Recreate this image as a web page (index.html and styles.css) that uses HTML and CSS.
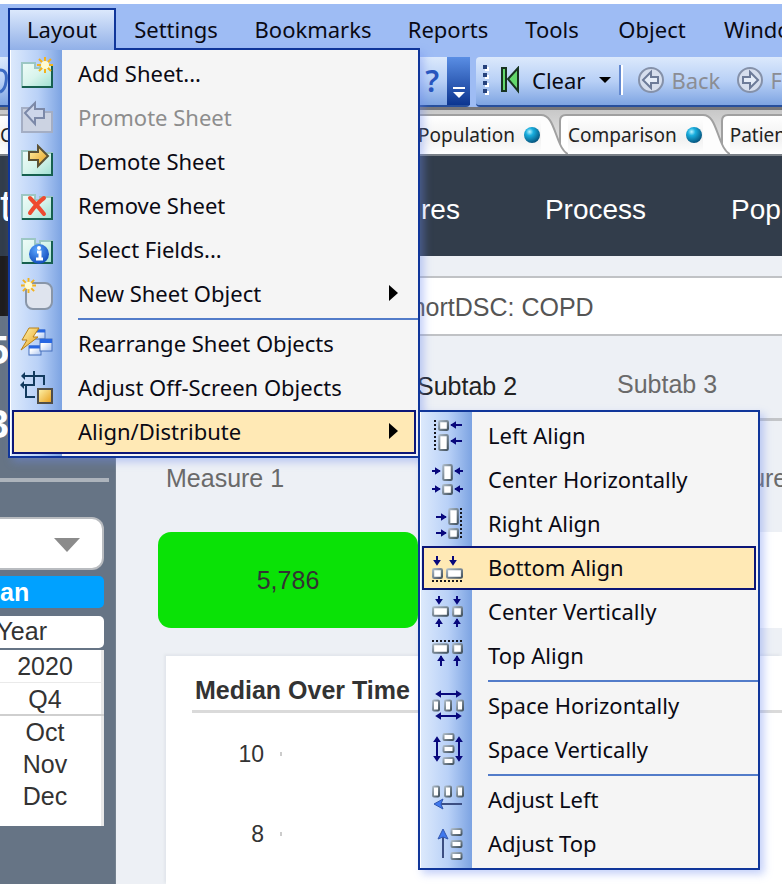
FILE: index.html
```html
<!DOCTYPE html>
<html lang="en">
<head>
<meta charset="utf-8">
<title>Dashboard</title>
<link rel="stylesheet" href="styles.css">
</head>
<body>
<svg class="defs" width="0" height="0" aria-hidden="true">
  <defs>
    <linearGradient id="sheet" x1="0" y1="0" x2="1" y2="1"><stop offset="0" stop-color="#effcf8"/><stop offset=".5" stop-color="#d8f4ec"/><stop offset="1" stop-color="#9fe0d2"/></linearGradient>
    <linearGradient id="gold" x1="0" y1="0" x2="1" y2="1"><stop offset="0" stop-color="#fff6b0"/><stop offset="1" stop-color="#e79c18"/></linearGradient>
    <linearGradient id="steel" x1="0" y1="0" x2="1" y2="1"><stop offset="0" stop-color="#a9b7c4"/><stop offset="1" stop-color="#44535f"/></linearGradient>
    <linearGradient id="win" x1="0" y1="0" x2="1" y2="1"><stop offset="0.3" stop-color="#fff"/><stop offset="1" stop-color="#a9c3f0"/></linearGradient>
    <radialGradient id="ball" cx=".35" cy=".3" r=".8"><stop offset="0" stop-color="#b8f2ff"/><stop offset=".3" stop-color="#19aede"/><stop offset="1" stop-color="#02466f"/></radialGradient>
    <radialGradient id="info" cx=".4" cy=".3" r=".8"><stop offset="0" stop-color="#5aa6ff"/><stop offset="1" stop-color="#0a42b4"/></radialGradient>
    <symbol id="box" viewBox="0 0 10 10"><rect x="1" y="1" width="8" height="8" rx="1" fill="#fff" stroke="url(#steel)" stroke-width="2"/></symbol>
    <symbol id="wide" viewBox="0 0 16 10"><rect x="1" y="1" width="14" height="8" rx="1" fill="#fff" stroke="url(#steel)" stroke-width="2"/></symbol>
    <symbol id="tall" viewBox="0 0 10 16"><rect x="1" y="1" width="8" height="14" rx="1" fill="#fff" stroke="url(#steel)" stroke-width="2"/></symbol>
    <symbol id="slim" viewBox="0 0 8 12"><rect x="1" y="1" width="6" height="10" rx="1" fill="#fff" stroke="url(#steel)" stroke-width="2"/></symbol>
    <symbol id="flat" viewBox="0 0 12 8"><rect x="1" y="1" width="10" height="6" rx="1" fill="#fff" stroke="url(#steel)" stroke-width="2"/></symbol>
    <symbol id="folder" viewBox="0 0 34 34"><path d="M2 7h13v5h5v-3h12v22H2z" fill="url(#sheet)" stroke="#9cc7c4" stroke-width="2"/><path d="M2 31h30V9" fill="none" stroke="#17604f" stroke-width="2"/></symbol>
    <symbol id="spark" viewBox="0 0 16 16"><path d="M8 0v16M0 8h16M2 2l12 12M14 2L2 14" stroke="#f3b21c" stroke-width="2"/><circle cx="8" cy="8" r="4" fill="#fffbd0"/></symbol>
    <symbol id="tabedge" viewBox="0 0 27 40"><path d="M0 1C8 1 11 9 15 20S22 39 27 39V40H0z" fill="#fdfdfd"/><path d="M19 31V7Q19 1 25 1H27V40H24z" fill="#fff"/><path d="M0 1C8 1 11 9 15 20S22 38 27 40M19 30V7Q19 1 25 1H27" fill="none" stroke="#a0a0a0" stroke-width="2"/></symbol>
  </defs>
</svg>

<header class="chrome">
  <nav class="menubar" aria-label="Application">
    <div class="menu-root">
      <button class="bar-item open" type="button">Layout</button>
      <div class="menu" role="menu">
        <button class="item" role="menuitem"><svg class="icon" viewBox="0 0 34 34"><use href="#folder" width="34" height="34"/><use href="#spark" x="17" y="1" width="16" height="16"/></svg>Add Sheet...</button>
        <button class="item" role="menuitem" disabled><svg class="icon" viewBox="0 0 34 34"><path d="M2 8h13v4h17v20H2z" fill="#ccd3e2" stroke="#a4aec4" stroke-width="2"/><path d="M5 13L15 3v6h9v9h-9v6z" fill="#cdd6ea" stroke="#7c89a8" stroke-width="2"/></svg>Promote Sheet</button>
        <button class="item" role="menuitem"><svg class="icon" viewBox="0 0 34 34"><use href="#folder" width="34" height="34"/><path d="M9 8h9V2l10 10-10 10v-6H9z" fill="url(#gold)" stroke="#5c5235" stroke-width="2"/></svg>Demote Sheet</button>
        <button class="item" role="menuitem"><svg class="icon" viewBox="0 0 34 34"><use href="#folder" width="34" height="34"/><path d="M10 10Q17 17 24 26M24 10Q17 15 10 25" fill="none" stroke="#ee4a30" stroke-width="4" stroke-linecap="round"/></svg>Remove Sheet</button>
        <button class="item" role="menuitem"><svg class="icon" viewBox="0 0 34 34"><use href="#folder" width="34" height="34"/><circle cx="19" cy="22" r="10" fill="url(#info)"/><path d="M17 20h3v7M16 27h7" fill="none" stroke="#fff" stroke-width="3"/><circle cx="19" cy="16" r="2" fill="#fff"/></svg>Select Fields...</button>
        <button class="item more" role="menuitem"><svg class="icon" viewBox="0 0 34 34"><rect x="6" y="7" width="26" height="26" rx="7" fill="#dfe4ee" stroke="#8996a8" stroke-width="2"/><use href="#spark" x="1" y="2" width="15" height="15"/></svg>New Sheet Object<svg class="arrow" viewBox="0 0 9 16"><path d="M0 0l9 8-9 8z"/></svg></button>
        <hr>
        <button class="item" role="menuitem"><svg class="icon" viewBox="0 0 34 34"><g stroke="#4770bd"><rect x="12" y="4" width="13" height="9" fill="url(#win)"/><path d="M12 5h13" stroke="#2867e2" stroke-width="3"/><rect x="9" y="20" width="12" height="9" fill="url(#win)"/><path d="M9 21h12" stroke="#2867e2" stroke-width="3"/><rect x="20" y="13" width="12" height="12" fill="url(#win)"/><path d="M20 15h12" stroke="#2867e2" stroke-width="4"/></g><path d="M9 2h10l-6 9h5L1 24l6-10H2z" fill="url(#gold)" stroke="#b88018"/></svg>Rearrange Sheet Objects</button>
        <button class="item" role="menuitem"><svg class="icon" viewBox="0 0 34 34"><path d="M3 6h21v9M3 15h11M6 15v12h9M14 1v15" fill="none" stroke="#123a5e" stroke-width="2"/><path d="M1 6l4-4v8zM0 15l4-4v8z" fill="#123a5e"/><rect x="18" y="19" width="14" height="14" fill="url(#gold)" stroke="#4f4d48" stroke-width="2"/></svg>Adjust Off-Screen Objects</button>
        <div class="sub-root">
          <button class="item more active" role="menuitem"><span class="icon"></span>Align/Distribute<svg class="arrow" viewBox="0 0 9 16"><path d="M0 0l9 8-9 8z"/></svg></button>
          <div class="menu submenu" role="menu">
            <button class="item" role="menuitem"><svg class="icon" viewBox="0 0 34 34"><path class="dots" d="M5 2v30"/><use href="#box" x="8" y="2" width="11" height="11"/><use href="#tall" x="8" y="16" width="11" height="17"/><path class="ar" d="M21 7h11M25 5v4l-3-2zM21 23h11M25 21v4l-3-2z"/></svg>Left Align</button>
            <button class="item" role="menuitem"><svg class="icon" viewBox="0 0 34 34"><use href="#tall" x="12" y="2" width="11" height="17"/><use href="#box" x="12" y="22" width="11" height="11"/><path class="ar" d="M2 9h8M6 7v4l3-2zM25 9h8M29 7v4l-3-2zM2 27h8M6 25v4l3-2zM25 27h8M29 25v4l-3-2z"/></svg>Center Horizontally</button>
            <button class="item" role="menuitem"><svg class="icon" viewBox="0 0 34 34"><path class="dots" d="M31 2v30"/><use href="#tall" x="18" y="2" width="11" height="17"/><use href="#box" x="18" y="22" width="11" height="11"/><path class="ar" d="M6 11h10M12 9v4l3-2zM6 27h10M12 25v4l3-2z"/></svg>Right Align</button>
            <button class="item active" role="menuitem"><svg class="icon" viewBox="0 0 34 34"><path class="dots" d="M2 31h32"/><use href="#box" x="2" y="18" width="11" height="11"/><use href="#wide" x="16" y="18" width="17" height="11"/><path class="ar" d="M7 6v9M5 11h4l-2 3zM23 6v9M21 11h4l-2 3z"/></svg>Bottom Align</button>
            <button class="item" role="menuitem"><svg class="icon" viewBox="0 0 34 34"><use href="#wide" x="2" y="12" width="17" height="11"/><use href="#box" x="22" y="12" width="11" height="11"/><path class="ar" d="M9 2v8M7 6h4l-2 3zM27 2v8M25 6h4l-2 3zM9 25v8M7 29h4l-2-3zM27 25v8M25 29h4l-2-3z"/></svg>Center Vertically</button>
            <button class="item" role="menuitem"><svg class="icon" viewBox="0 0 34 34"><path class="dots" d="M2 3h32"/><use href="#wide" x="2" y="5" width="17" height="11"/><use href="#box" x="22" y="5" width="11" height="11"/><path class="ar" d="M11 18v10M9 22h4l-2-3zM27 18v10M25 22h4l-2-3z"/></svg>Top Align</button>
            <hr>
            <button class="item" role="menuitem"><svg class="icon" viewBox="0 0 34 34"><use href="#slim" x="2" y="11" width="8" height="13"/><use href="#slim" x="14" y="11" width="8" height="13"/><use href="#slim" x="26" y="11" width="8" height="13"/><path class="ar" d="M7 6h22M10 4v4l-3-2zM27 4v4l3-2zM7 28h22M10 26v4l-3-2zM27 26v4l3-2z"/></svg>Space Horizontally</button>
            <button class="item" role="menuitem"><svg class="icon" viewBox="0 0 34 34"><use href="#flat" x="12" y="1" width="13" height="8"/><use href="#flat" x="12" y="13" width="13" height="8"/><use href="#flat" x="12" y="25" width="13" height="8"/><path class="ar" d="M7 6v22M5 9h4l-2-3zM5 25h4l-2 3zM29 6v22M27 9h4l-2-3zM27 25h4l-2 3z"/></svg>Space Vertically</button>
            <hr>
            <button class="item" role="menuitem"><svg class="icon" viewBox="0 0 34 34"><use href="#slim" x="2" y="3" width="8" height="13"/><use href="#slim" x="14" y="3" width="8" height="13"/><use href="#slim" x="26" y="3" width="8" height="13"/><path d="M8 22h24" stroke="#3c4e82" stroke-width="2"/><path d="M4 22l9-5-2 5 2 5z" fill="#3f78ee" stroke="#3156ae"/></svg>Adjust Left</button>
            <button class="item" role="menuitem"><svg class="icon" viewBox="0 0 34 34"><use href="#flat" x="20" y="2" width="13" height="8"/><use href="#flat" x="20" y="14" width="13" height="8"/><use href="#flat" x="20" y="26" width="13" height="8"/><path d="M13 8v24" stroke="#3c4e82" stroke-width="2"/><path d="M13 3l-5 10 5-2 5 2z" fill="#3f78ee" stroke="#3156ae"/></svg>Adjust Top</button>
          </div>
        </div>
      </div>
    </div>
    <button class="bar-item" type="button">Settings</button>
    <button class="bar-item" type="button">Bookmarks</button>
    <button class="bar-item" type="button">Reports</button>
    <button class="bar-item" type="button">Tools</button>
    <button class="bar-item" type="button">Object</button>
    <button class="bar-item last" type="button">Window</button>
  </nav>

  <div class="toolbars">
    <div class="toolbar first">
      <svg class="undo" viewBox="0 0 10 30"><path d="M0 4Q8 4 6 16Q5 24 0 26" fill="none" stroke="#3d6cc4" stroke-width="3"/></svg>
      <button class="help" type="button">?</button>
      <button class="overflow" type="button" aria-label="More buttons"><svg viewBox="0 0 14 12"><path d="M1 1h12" stroke="#fff" stroke-width="2"/><path d="M1 5h12l-6 6z" fill="#fff"/></svg></button>
    </div>
    <div class="toolbar second">
      <svg class="grip" viewBox="0 0 8 32"><path d="M5 3v28" stroke="#fff" stroke-width="4" stroke-dasharray="4 4"/><path d="M3 1v28" stroke="#26427c" stroke-width="4" stroke-dasharray="4 4"/></svg>
      <button class="tool clear" type="button"><svg class="glyph-clear" viewBox="0 0 22 28"><path d="M2 2h4v23H2zM18 2v23L8 13z" fill="#63d86c" stroke="#183420" stroke-width="2"/></svg>Clear<svg class="caret" viewBox="0 0 12 6"><path d="M0 0h12L6 6z"/></svg></button>
      <span class="divider"></span>
      <button class="tool" type="button" disabled><svg class="round" viewBox="0 0 28 28"><circle cx="14" cy="14" r="12" fill="#d6deed" stroke="#8591a9" stroke-width="2"/><path d="M6 14l8-8v5h7v6h-7v5z" fill="#e6edf8" stroke="#6d7b98" stroke-width="2"/></svg>Back</button>
      <button class="tool" type="button" disabled><svg class="round" viewBox="0 0 28 28"><circle cx="14" cy="14" r="12" fill="#d6deed" stroke="#8591a9" stroke-width="2"/><path d="M22 14l-8-8v5H7v6h7v5z" fill="#e6edf8" stroke="#6d7b98" stroke-width="2"/></svg>Forward</button>
    </div>
  </div>

  <div class="sheet-tabs">
    <button class="sheet-tab lead" type="button">C</button>
    <button class="sheet-tab" type="button">Population<svg class="ball" viewBox="0 0 18 18"><circle cx="9" cy="9" r="8" fill="url(#ball)"/></svg></button>
    <svg class="edge"><use href="#tabedge"/></svg>
    <button class="sheet-tab" type="button">Comparison<svg class="ball" viewBox="0 0 18 18"><circle cx="9" cy="9" r="8" fill="url(#ball)"/></svg></button>
    <svg class="edge"><use href="#tabedge"/></svg>
    <button class="sheet-tab" type="button">Patient</button>
  </div>
</header>

<nav class="topnav" aria-label="Sections">
  <span class="brand">t</span>
  <a href="#">Measures</a>
  <a href="#">Process</a>
  <a href="#">Population</a>
</nav>

<div class="page">
  <aside class="sidebar">
    <div class="side-head"></div>
    <p class="stat">5</p>
    <p class="stat">3</p>
    <hr class="side-rule">
    <div class="picker">
      <select aria-label="Selection"><option></option></select>
      <svg class="picker-arrow" viewBox="0 0 26 14"><path d="M0 0h26L13 14z"/></svg>
    </div>
    <button class="median" type="button">an</button>
    <div class="year">Year</div>
    <ul class="dates"><li class="period">2020</li><li class="period quarter">Q4</li><li>Oct</li><li>Nov</li><li>Dec</li></ul>
  </aside>
  <main class="content">
    <div class="filter">ShortDSC: COPD</div>
    <nav class="subtabs" aria-label="Subtabs"><a href="#" class="current">Subtab 2</a><a href="#">Subtab 3</a></nav>
    <section class="measures">
      <div class="measure"><h2>Measure 1</h2><div class="value good">5,786</div></div>
      <div class="measure"><div class="value"></div></div>
      <div class="measure"><h2>Measure 3</h2><div class="value"></div></div>
    </section>
    <section class="chart">
      <h3>Median Over Time</h3>
      <div class="axis"><span>10</span><span>8</span></div>
    </section>
  </main>
</div>
</body>
</html>
```

FILE: styles.css
```css
* { box-sizing: border-box; }

body {
  margin: 0;
  min-height: 100vh;
  display: flex;
  flex-direction: column;
  overflow: hidden;
  background: #edf0f5;
  color: #333;
  font: 25px/32px "Liberation Sans", Arial, sans-serif;
}

button {
  margin: 0;
  padding: 0;
  border: 0;
  background: none;
  color: #0a0a14;
  font: 22px/30px "Noto Sans", "Open Sans", sans-serif;
  white-space: nowrap;
}

a { color: inherit; text-decoration: none; }
svg { display: block; flex: none; }
.defs { position: absolute; }

/* Menu bar */
.chrome { position: relative; z-index: 2; }

.menubar {
  display: grid;
  grid-template-columns: 108px 120px 154px 116px 92px 108px 1fr;
  padding-left: 8px;
  height: 57px;
  border-top: 4px solid #fff;
  background: #9ebcf4;
}

.menu-root { position: relative; }
.bar-item { width: 100%; height: 42px; margin-top: 4px; }
.bar-item.last { padding-left: 18px; overflow: hidden; text-align: left; }

.bar-item.open {
  position: relative;
  z-index: 2;
  padding-bottom: 2px;
  border: 2px solid #10369a;
  border-bottom: 0;
  background: linear-gradient(#dbe8fc, #91b0e8);
}

.menu {
  position: absolute;
  top: 44px;
  left: 0;
  width: 412px;
  padding: 2px;
  border: 2px solid #10369a;
  background: linear-gradient(to right, #fff 1px, #dce9fc 1px, #b9d1f7 28px, #7ca3e2 52px, #f5f5f5 52px);
  box-shadow: 4px 4px 8px rgba(110, 140, 240, .4);
}

.item {
  display: flex;
  align-items: center;
  width: 100%;
  height: 44px;
  padding: 0 16px 2px 0;
  border: 2px solid transparent;
}

.item:disabled { color: #8d8d8d; }
.item.active { border-color: #0c1678; background: #ffe9b5; }
.item .icon { width: 34px; height: 34px; margin: 0 24px 0 6px; }
.arrow { width: 9px; height: 16px; margin-left: auto; }

.menu hr {
  height: 2px;
  margin: 2px -2px 2px 66px;
  border: 0;
  background: #537cc9;
}

.sub-root { position: relative; }
.submenu { top: 0; left: 406px; width: 342px; }

.ar { fill: #08087c; stroke: #08087c; stroke-width: 2; }
.dots { fill: none; stroke: #15151c; stroke-width: 2; stroke-dasharray: 2 2; }

/* Toolbars */
.toolbars { display: flex; gap: 6px; height: 50px; background: #9ebcf4; }

.toolbar {
  display: flex;
  align-items: center;
  border-bottom: 2px solid #274f9c;
  background: linear-gradient(#dce9fc, #b8d0f6 50%, #7ea4e2);
}

.first { flex: none; width: 470px; border-radius: 0 4px 4px 0; }
.second { flex: 1; min-width: 0; padding: 0 0 2px 6px; border-radius: 4px 0 0 4px; overflow: hidden; }
.undo { width: 10px; height: 30px; }
.help { margin-left: auto; padding-right: 8px; color: #2855bd; font-size: 30px; font-weight: 600; }

.overflow {
  display: flex;
  align-items: flex-end;
  justify-content: center;
  width: 23px;
  height: 48px;
  padding-bottom: 6px;
  background: linear-gradient(#5a8ee4, #0c3590);
}

.overflow svg { width: 14px; height: 12px; }
.grip { width: 8px; height: 32px; margin-right: 10px; }
.tool { display: flex; flex: none; align-items: center; gap: 6px; margin-right: 16px; }
.tool:disabled { color: #8b8d94; }
.clear { gap: 10px; margin-right: 8px; }
.glyph-clear { width: 22px; height: 28px; }
.caret { width: 12px; height: 6px; margin-left: 4px; }
.divider { flex: none; width: 4px; height: 30px; margin-right: 14px; border-left: 2px solid #6389d0; border-right: 2px solid #fff; }
.round { width: 28px; height: 28px; }

/* Sheet tabs */
.sheet-tabs {
  display: flex;
  align-items: flex-end;
  height: 49px;
  border-top: 3px solid #77777a;
  border-bottom: 2px solid #7a8087;
  background: linear-gradient(#c8c8c8, #ececec);
  overflow: hidden;
}

.sheet-tab {
  display: flex;
  flex: none;
  align-items: center;
  gap: 8px;
  height: 40px;
  border-top: 2px solid #a0a0a0;
  background: linear-gradient(#fff, #f1f1f1 60%, #fff);
  color: #222;
  font-size: 19px;
}

.sheet-tab.lead { width: 418px; }
.ball { width: 18px; height: 18px; }
.edge { width: 27px; height: 40px; }

/* Section navigation */
.topnav {
  display: flex;
  flex: none;
  align-items: center;
  gap: 85px;
  height: 100px;
  overflow: hidden;
  background: #323d4b;
  color: #fff;
  font-size: 28px;
}

.topnav a { flex: none; padding-top: 8px; }
.brand { flex: none; width: 252px; font-size: 44px; }

.page { display: flex; flex: 1; }

/* Sidebar */
.sidebar { flex: none; width: 116px; background: #667485; border-right: 1px solid #74818f; }
.side-head { height: 60px; background: #1f1d1d; }
.stat { width: 9px; margin: 16px 0 0; direction: rtl; color: #fff; font-size: 40px; font-weight: bold; line-height: 36px; }
.stat + .stat { margin: 38px 0 0; }
.side-rule { height: 4px; margin: 36px 6px 35px 0; border: 0; background: #adb4bc; }
.picker { position: relative; width: 104px; }

.picker select {
  display: block;
  width: 100%;
  height: 53px;
  appearance: none;
  border: 2px solid #b9bcc0;
  border-left: 0;
  border-radius: 0 12px 12px 0;
  background: #fff;
}

.picker-arrow { position: absolute; top: 21px; right: 24px; width: 26px; height: 14px; fill: #8b8b8b; pointer-events: none; }

.median {
  display: block;
  width: 104px;
  height: 32px;
  margin-top: 6px;
  border-radius: 0 5px 5px 0;
  background: #00a1ff;
  color: #fff;
  font: bold 25px/30px "Liberation Sans", Arial, sans-serif;
  text-align: left;
}

.year { width: 104px; height: 32px; margin-top: 8px; padding-right: 57px; border-radius: 0 5px 5px 0; background: #fff; direction: rtl; line-height: 31px; white-space: nowrap; }
.dates { width: 104px; height: 176px; margin: 2px 0 0; padding: 0 14px 0 0; background: #fff; list-style: none; text-align: center; box-shadow: inset -3px 0 #e9e9e9; }
.dates .period { height: 33px; margin-right: -14px; padding-right: 14px; border-bottom: 1px solid #eaeaea; }
.dates .quarter { border-bottom: 2px solid #cfcfcf; }

/* Content */
.content { flex: 1; min-width: 0; }
.filter { height: 60px; margin-top: 20px; padding-left: 279px; border-top: 2px solid #c0c2c5; border-bottom: 2px solid #c0c2c5; background: #fff; color: #555; line-height: 58px; }

.subtabs {
  display: grid;
  grid-template-columns: repeat(2, 200px);
  height: 85px;
  padding: 32px 0 0 301px;
  border-bottom: 3px solid #c3c5c8;
  color: #6a6a6a;
}

.subtabs .current { padding-top: 2px; color: #222; }

.measures { display: grid; grid-template-columns: repeat(3, 260px); gap: 2px; align-items: end; padding: 41px 0 0 42px; overflow: hidden; }
.measure h2 { margin: 0 0 38px; padding-left: 8px; color: #6a6a6a; font-size: 25px; font-weight: normal; line-height: 32px; }
.value { height: 96px; border-radius: 13px; background: #fff; line-height: 96px; text-align: center; }
.good { background: #0ae206; }

.chart { margin: 28px 0 0 50px; padding: 16px 0 0 26px; background: #fff; box-shadow: -2px -2px 2px #e3e7ec; }
.chart h3 { margin: 0; padding: 2px 0 4px 3px; border-bottom: 3px solid #dadada; font-size: 25px; line-height: 32px; }
.axis { display: grid; justify-items: end; gap: 48px; width: 91px; padding: 25px 0 35px; font-size: 23px; }
.axis span { padding-right: 18px; border-right: 1px solid transparent; background: linear-gradient(#ccc, #ccc) right center / 2px 4px no-repeat; }
```
